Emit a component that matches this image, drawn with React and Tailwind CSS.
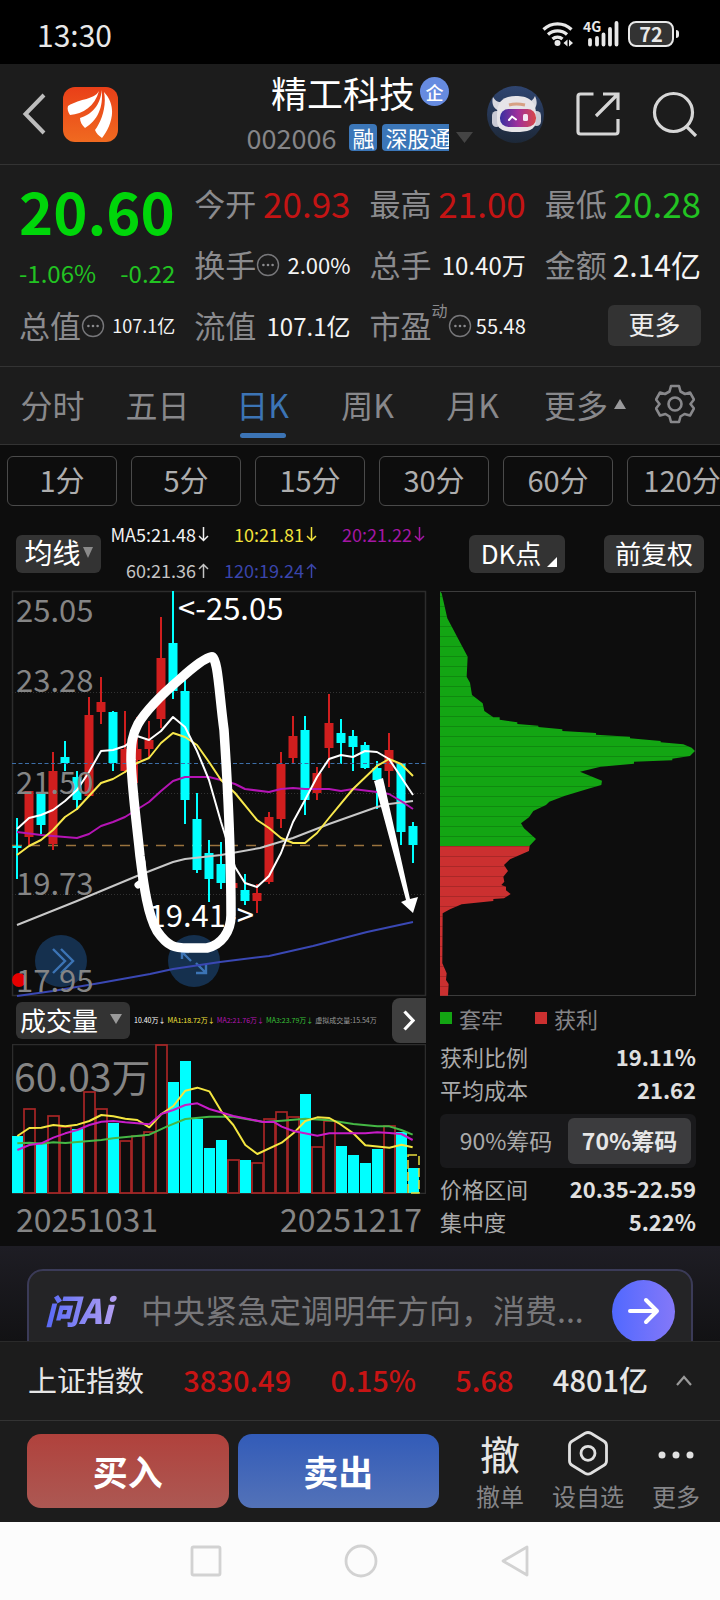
import React from "react";

const quoteValue = { red: "text-[#c41414]", green: "text-[#22c322]", white: "text-[#f4f4f4]" };

// color, high, body top, body bottom, low
const candles = [
  ["c", 818, 846, 848, 879], ["r", 791, 791, 837, 845], ["c", 793, 793, 825, 834],
  ["r", 752, 771, 844, 850], ["c", 741, 757, 763, 771], ["c", 771, 777, 800, 810],
  ["r", 697, 715, 796, 796], ["r", 677, 702, 712, 724], ["c", 711, 712, 763, 771],
  ["r", 711, 749, 771, 773], ["r", 717, 749, 760, 783], ["r", 721, 740, 749, 757],
  ["r", 617, 658, 719, 728], ["c", 591, 643, 691, 699], ["c", 680, 691, 800, 824],
  ["c", 793, 819, 870, 873], ["c", 840, 853, 879, 902], ["c", 842, 864, 883, 889],
  ["r", 870, 883, 888, 890], ["c", 874, 890, 901, 905], ["r", 884, 893, 901, 913],
  ["r", 812, 817, 882, 884], ["r", 752, 764, 819, 828], ["r", 716, 736, 758, 764],
  ["c", 716, 730, 800, 815], ["r", 767, 773, 793, 800], ["r", 694, 723, 748, 768],
  ["c", 719, 733, 743, 764], ["c", 730, 736, 747, 771], ["c", 742, 745, 768, 769],
  ["c", 761, 768, 780, 809], ["r", 733, 750, 771, 787], ["c", 763, 764, 832, 845],
  ["c", 822, 826, 845, 863],
];

const volumes = [
  ["c", 1136], ["r", 1109], ["c", 1144], ["r", 1116], ["r", 1127], ["c", 1129],
  ["r", 1092], ["r", 1109], ["c", 1123], ["r", 1141], ["r", 1136], ["r", 1132],
  ["r", 1045], ["c", 1082], ["c", 1061], ["c", 1119], ["c", 1148], ["c", 1140],
  ["r", 1160], ["c", 1160], ["r", 1163], ["r", 1119], ["r", 1112], ["r", 1117],
  ["c", 1094], ["r", 1147], ["r", 1121], ["c", 1146], ["c", 1155], ["c", 1163],
  ["c", 1149], ["r", 1126], ["c", 1132], ["c", 1168],
];

function More() {
  return (
    <svg viewBox="0 0 24 24" className="h-6 w-6 shrink-0" fill="none" aria-hidden="true">
      <circle cx="12" cy="12" r="10.5" stroke="#77777a" strokeWidth="1.4" />
      <g fill="#8b8b8e"><circle cx="7.4" cy="12" r="1.3" /><circle cx="12" cy="12" r="1.3" /><circle cx="16.6" cy="12" r="1.3" /></g>
    </svg>
  );
}

function Quote({ label, sup, more, value, tone = "white", size }) {
  return (
    <div className="flex items-center justify-between whitespace-nowrap">
      <span className="flex items-center text-[31px] text-[#8b8b8e]">
        {label}
        {sup && <sup className="-top-4 text-[16px] leading-4">{sup}</sup>}
        {more && <More />}
      </span>
      <span className={`${quoteValue[tone]} ${size}`}>{value}</span>
    </div>
  );
}

function StatusBar() {
  return (
    <div className="flex h-16 items-center justify-between bg-black pr-[41px] pl-[37px] pt-1 text-[#e8e8e8]">
      <span className="text-[30px]">13:30</span>
      <div className="flex items-center gap-[9px]">
        <svg width="32" height="26" viewBox="0 0 32 26" fill="none" stroke="#e8e8e8" strokeWidth="3.2" aria-hidden="true">
          <path d="M1.5 8.5a20 20 0 0 1 28 0M6 13.5a14 14 0 0 1 19 0M10.5 18a7.5 7.5 0 0 1 10 0" />
          <circle cx="15.5" cy="22" r="3" fill="#e8e8e8" stroke="none" />
          <path d="M25.5 18.500v7l-4-3.500zM27 18.500v7l4-3.500z" fill="#e8e8e8" stroke="none" />
        </svg>
        <div className="relative h-[26px] w-9">
          <span className="absolute -top-1 left-0 text-[14px] leading-[18px] font-bold">4G</span>
          <svg width="36" height="26" viewBox="0 0 36 26" stroke="#e8e8e8" strokeWidth="3.8" strokeLinecap="round" aria-hidden="true">
            <path d="M7 19v4.500M14 17v6.500M20.500 13.500v10M27 8v15.500M33.500 2v21.500" />
          </svg>
        </div>
        <div className="flex items-center gap-0.5">
          <span className="flex h-[26px] w-[46px] items-center justify-center rounded-[8px] border-2 border-[#e8e8e8] bg-[#333] text-[20px] font-bold">72</span>
          <span className="h-2 w-[3px] rounded-r bg-[#e8e8e8]" />
        </div>
      </div>
    </div>
  );
}

function Header() {
  return (
    <header className="grid h-[101px] grid-cols-[1fr_auto_1fr] items-center border-b border-[#333] bg-[#1c1c1c]">
      <div className="flex items-center gap-[17px] pl-[22px]">
        <button aria-label="返回">
          <svg width="24" height="42" viewBox="0 0 24 42" fill="none" stroke="#bdbdbd" strokeWidth="4" aria-hidden="true"><path d="M22 2 3.500 21 22 40" /></svg>
        </button>
        <svg width="55" height="55" viewBox="0 0 55 55" aria-hidden="true">
          <defs><linearGradient id="brand" x1="0" y1="0" x2="0" y2="1"><stop stopColor="#e93f18" /><stop offset="1" stopColor="#f06a20" /></linearGradient></defs>
          <rect width="55" height="55" rx="12" fill="url(#brand)" />
          <path d="M36 4C31 13 18 11 5 19c-1 3 0 6 2 9 13-1 25-9 29-24Z" fill="#fff" />
          <path d="M38.500 3C38 18 28 28 17 31c0 4 2 7 5 10C34 34 41 20 38.500 3Z" fill="#fff" />
          <path d="M41 5c3 15-3 30-9 38 1 3 4 6 7 8 8-10 17-30 2-46Z" fill="#fff" />
        </svg>
      </div>
      <div className="flex flex-col items-center gap-2.5 pb-2">
        <div className="flex items-center gap-[5px]">
          <h1 className="text-[36px] leading-[44px] text-white">精工科技</h1>
          <span className="flex h-[29px] w-[29px] items-center justify-center rounded-full bg-[#668be0] text-[18px] leading-[18px] font-medium text-white">企</span>
        </div>
        <div className="flex items-center gap-[5px] text-[22px] leading-[27px] text-white">
          <span className="mr-2 text-[27px] text-[#858588]">002006</span>
          <span className="rounded bg-[#3b76b8] px-[3px]">融</span>
          <span className="w-[67px] overflow-hidden rounded-l bg-[#3b76b8] pl-[3px] whitespace-nowrap">深股通</span>
          <svg width="17" height="11" viewBox="0 0 17 11" className="ml-0.5" aria-hidden="true"><path d="M0 0h17L8.500 11z" fill="#444" /></svg>
        </div>
      </div>
      <div className="flex items-center justify-end gap-8 pr-[22px]">
        <button aria-label="智能助手">
          <svg width="57" height="57" viewBox="0 0 57 57" aria-hidden="true">
            <defs><linearGradient id="visor"><stop stopColor="#3730a0" /><stop offset=".5" stopColor="#a02f9b" /><stop offset="1" stopColor="#d94848" /></linearGradient>
              <linearGradient id="disk" x1="0" y1="0" x2="0" y2="1"><stop stopColor="#2f4570" /><stop offset="1" stopColor="#1d2838" /></linearGradient></defs>
            <circle cx="28.500" cy="28.500" r="28.500" fill="url(#disk)" />
            <path d="M6 11c-2 7 1 13 8 14l5-9c-6 1-10 0-13-5ZM48 10c3 6 2 13-4 15l-7-9c5 1 9-1 11-6Z" fill="#d8d8df" />
            <rect x="5" y="25" width="9" height="16" rx="4.500" fill="#c9cad5" /><rect x="45" y="25" width="9" height="15" rx="4.500" fill="#c9cad5" />
            <path d="M10 28C10 14 18 10 29 10s20 4 20 18v7c0 9-9 11-20 11s-19-2-19-11Z" fill="#e6e4e8" />
            <path d="M22 19q7-2 16 0" stroke="#d7a184" strokeWidth="3" fill="none" />
            <rect x="13" y="23" width="36" height="18" rx="8.500" fill="url(#visor)" />
            <path d="m22 34 3-3.500 4 3" stroke="#fff" strokeWidth="2" fill="none" strokeLinecap="round" /><rect x="36" y="28" width="5" height="7" rx="1.500" fill="#f3e6f4" />
          </svg>
        </button>
        <button aria-label="分享">
          <svg width="44" height="44" viewBox="0 0 44 44" fill="none" stroke="#d6d6d6" strokeWidth="3.2" aria-hidden="true"><path d="M17.500 2H4.500Q2 2 2 4.500v35Q2 42 4.500 42h35q2.500 0 2.500-2.500V27M27 2h15v16M42 2 20 24" /></svg>
        </button>
        <button aria-label="搜索">
          <svg width="46" height="46" viewBox="0 0 46 46" fill="none" stroke="#d6d6d6" strokeWidth="3.2" aria-hidden="true"><circle cx="21.500" cy="21.500" r="19" /><path d="m34 35 10 10" /></svg>
        </button>
      </div>
    </header>
  );
}

function Quotes() {
  return (
    <section className="grid grid-cols-4 grid-rows-[repeat(3,61px)] gap-x-[19px] border-b border-[#333] bg-[#1c1c1c] px-[19px] pt-2 pb-2.5">
      <div className="row-span-2 flex flex-col gap-2.5 text-[#00d60a]">
        <strong className="text-[58px] leading-[74px] font-bold">20.60</strong>
        <div className="flex justify-between text-[24px] leading-8 text-[#22c322]"><span>-1.06%</span><span>-0.22</span></div>
      </div>
      <Quote label="今开" value="20.93" tone="red" size="text-[35px]" />
      <Quote label="最高" value="21.00" tone="red" size="text-[35px]" />
      <Quote label="最低" value="20.28" tone="green" size="text-[35px]" />
      <Quote label="换手" more value="2.00%" size="text-[22px]" />
      <Quote label="总手" value="10.40万" size="text-[24px]" />
      <Quote label="金额" value="2.14亿" size="text-[30px]" />
      <Quote label="总值" more value="107.1亿" size="text-[18px]" />
      <Quote label="流值" value="107.1亿" size="text-[24px]" />
      <Quote label="市盈" sup="动" more value="55.48" size="text-[20px]" />
      <button className="h-[41px] w-[93px] self-center justify-self-end rounded-md bg-[#333] pb-1 text-[26px] leading-9 text-[#eee]">更多</button>
    </section>
  );
}

function Tabs() {
  return (
    <nav className="grid h-[78px] grid-cols-[repeat(5,105fr)_120fr_60fr] items-stretch border-b border-[#333] bg-[#1c1c1c] pr-[15px] pb-1 text-[32px] text-[#88888b]">
      <button>分时</button>
      <button>五日</button>
      <button className="relative text-[#3c74b5]" aria-current="page">日K<span className="absolute bottom-0.5 left-1/2 h-[5px] w-[46px] -translate-x-1/2 rounded-full bg-[#3c74b5]" /></button>
      <button>周K</button>
      <button>月K</button>
      <button className="flex items-center justify-center gap-1.5">更多<svg width="12" height="10" viewBox="0 0 12 10" aria-hidden="true"><path d="M6 0l6 10H0z" fill="#9a9a9c" /></svg></button>
      <button aria-label="设置" className="flex items-center justify-center">
        <svg width="40" height="40" viewBox="0 0 40 40" fill="none" stroke="#88888b" strokeWidth="2.6" strokeLinejoin="round" aria-hidden="true">
          <path d="M16 2h8l1.500 5.500 4.500 2.500 5-1.500 4 7-3.500 4.500L39 24.500l-4 7-5.500-1.500-4 2.500L24 38h-8l-1.500-5.500-4-2.500L5 31.500l-4-7L4.500 20 1 15.500l4-7L10 10l4.500-2.500Z" />
          <circle cx="20" cy="20" r="6.500" />
        </svg>
      </button>
    </nav>
  );
}

function Intervals() {
  return (
    <div className="flex gap-3.5 overflow-hidden px-[7px] pt-[11px] text-[29px] text-[#aeaeae]">
      {["1分", "5分", "15分", "30分", "60分", "120分"].map((t) => (
        <button key={t} className="h-[50px] w-[110px] shrink-0 rounded-md border border-[#4a4a4a] pb-1 leading-[42px]">{t}</button>
      ))}
    </div>
  );
}

function Ma({ children, up, className }) {
  return <span className={`flex items-center justify-end gap-0.5 ${className}`}>{children}
    <svg width="11" height="15" viewBox="0 0 11 15" fill="none" stroke="currentColor" strokeWidth="1.5" aria-label={up ? "升" : "降"}>
      <path d={up ? "M5.500 15V1.500M1 6l4.500-4.500L10 6" : "M5.500 0v13.500M1 9l4.500 4.500L10 9"} />
    </svg>
  </span>;
}

function ChartTools() {
  return (
    <div className="flex h-[84px] pr-4 pl-4">
      <button className="mt-[29px] flex h-[38px] w-[85px] items-center justify-center gap-0.5 rounded-md bg-[#333] pb-1 text-[28px] text-white">均线
        <svg width="10" height="11" viewBox="0 0 10 11" aria-hidden="true"><path d="M0 0h10L5 11z" fill="#8a8a8a" /></svg>
      </button>
      <div className="grid w-[324px] grid-cols-3 grid-rows-[36px_36px] pt-2.5 text-[18px] whitespace-nowrap">
        <Ma className="text-[#f2f2f2]">MA5:21.48</Ma>
        <Ma className="text-[#f2e33c]">10:21.81</Ma>
        <Ma className="text-[#a416a4]">20:21.22</Ma>
        <Ma up className="text-[#c4c4c4]">60:21.36</Ma>
        <Ma up className="text-[#3a45ac]">120:19.24</Ma>
      </div>
      <div className="mt-[29px] flex flex-1 justify-between pl-11">
        <button className="flex h-[38px] w-24 items-center justify-center gap-1.5 rounded-md bg-[#333] pb-1 pl-1 text-[26px] text-white">DK点
          <svg width="10" height="10" viewBox="0 0 10 10" className="mt-5" aria-hidden="true"><path d="M10 0v10H0z" fill="#fff" /></svg>
        </button>
        <button className="flex h-[38px] w-[100px] items-center justify-center rounded-md bg-[#333] pb-1 text-[26px] text-white">前复权</button>
      </div>
    </div>
  );
}

function Line({ points, color, width = 2 }) {
  return <polyline points={points} fill="none" stroke={color} strokeWidth={width} strokeLinejoin="round" />;
}

function KLine() {
  return (
    <svg viewBox="12 591 414 405" className="block w-full overflow-visible" role="img" aria-label="日K线">
      <rect x="12.500" y="591.500" width="413" height="404" fill="none" stroke="#2c2c2c" strokeWidth="1.500" />
      <g stroke="#333" strokeDasharray="1 2"><path d="M12 692.500h414M12 793.500h414M12 894.500h414" /></g>
      <g fill="#15304e"><circle cx="61" cy="961" r="26" /><circle cx="194" cy="961" r="26" /></g>
      <g fill="none" stroke="#3c74b5" strokeWidth="2.400"><path d="m53 949 12 12-12 12M61 949l12 12-12 12M182 959v-7h7M182 952l9 9M206 965v8h-10M206 973l-10-10" /></g>
      <circle cx="19" cy="980" r="7" fill="#e60000" />
      <path d="M12 845.500h370" stroke="#9a733e" strokeDasharray="10 8" strokeWidth="1.300" />
      {candles.map(([c, high, top, bottom, low], i) => {
        const x = 17 + i * 12;
        const color = c === "c" ? "#00ffff" : "#d01e1e";
        return <g key={i} fill={color}><rect x={x - 1} y={high} width="2" height={low - high} /><rect x={x - 4.5} y={top} width="9" height={bottom - top} /></g>;
      })}
      <path d="M12 763.500h414" stroke="#3c6ea8" strokeDasharray="4 2.500" />
      <Line color="#c8c8c8" points="17,925 77,901 101,891 137,876 173,862 185,859 221,855 260,848 293,838 329,824 377,807 389,804 413,801" />
      <Line color="#3a48b4" points="17,996 53,991 100,983 150,974 173,969 220,962 269,956 313,946 367,932 413,922" />
      <Line color="#b414b4" points="17,832 41,835 77,838 89,834 101,826 113,822 125,817 149,802 161,791 173,781 185,777 209,777 221,780 235,784 245,789 269,792 281,789 293,788 305,789 329,789 341,791 353,789 377,792 389,794 401,801 413,809" />
      <Line color="#f8e84c" points="17,855 29,846 41,840 53,830 65,817 77,809 89,796 101,783 113,779 125,772 137,763 149,758 161,743 173,733 185,737 197,745 209,762 221,780 235,793 257,820 269,828 281,838 293,843 305,843 317,833 329,818 353,789 377,766 389,759 401,764 413,776" />
      <Line color="#fff" points="17,829 29,818 41,815 53,810 65,801 77,790 89,772 101,751 113,750 125,746 137,736 149,740 161,731 173,717 185,727 197,751 209,780 221,822 235,867 245,883 257,887 269,876 281,853 293,822 305,800 317,777 329,759 341,755 353,757 365,751 377,752 389,759 401,777 413,795" />
      <g fill="#858585" fontSize="31">
        <text x="16" y="622">25.05</text><text x="16" y="692">23.28</text><text x="16" y="794">21.50</text><text x="16" y="895">19.73</text><text x="16" y="992">17.95</text>
      </g>
      <g fill="#fff" fontSize="31"><text x="178" y="620">&lt;-25.05</text><text x="254" y="927" textAnchor="end">19.41-&gt;</text></g>
      <path d="M211 657C204 658 190 670 180 679 166 691 147 709 138 724 132 735 131 744 131 760 132 790 137 826 140 856 144 888 148 915 157 931 168 947 175 948 188 948H207C221 945 231 932 231 915 231 870 228 790 224 730 219 694 218 655 211 657Z" fill="none" stroke="#fff" strokeWidth="9.500" strokeLinejoin="round" />
      <path d="M142 862v20l-4 3" stroke="#fff" strokeWidth="7" strokeLinecap="round" fill="none" />
      <path d="M374 781 383 778 410 899 418 897 413 913 401 902 406 900Z" fill="#fff" />
    </svg>
  );
}

function VolumeChart() {
  return (
    <svg viewBox="12 1044 414 150" className="block w-full" role="img" aria-label="成交量图">
      <rect x="12.500" y="1044.500" width="413" height="149" fill="none" stroke="#2c2c2c" strokeWidth="1.500" />
      <text x="14" y="1092" fontSize="39" fill="#858585">60.03万</text>
      {volumes.map(([c, top], i) => c === "c"
        ? <rect key={i} x={12 + i * 12} y={top} width="11" height={1193 - top} fill="#00ffff" />
        : <rect key={i} x={12 + i * 12} y={top} width="11" height={1193 - top} fill="none" stroke="#a82626" strokeWidth="1.700" />)}
      <rect x="408" y="1155" width="11" height="38" fill="none" stroke="#e8dc3c" strokeWidth="1.500" strokeDasharray="9 3" />
      <g transform="translate(0 990) scale(.33333)">
        <Line width="6" color="#45b845" points="52,460 88,458 124,461 160,457 196,459 268,453 304,450 340,445 448,434 500,410 556,387 628,380 700,380 790,396 845,392 916,386 988,391 1060,402 1132,409 1168,409 1204,420 1238,434" />
        <Line width="6" color="#f4e640" points="52,438 88,414 124,413 160,405 196,409 232,404 268,393 304,375 340,379 376,386 412,390 448,412 484,372 520,348 556,302 592,293 628,304 664,364 700,405 736,465 772,492 845,458 880,430 916,393 952,382 988,384 1020,402 1060,430 1096,466 1168,473 1204,464 1238,472" />
        <Line width="6" color="#c81cc8" points="52,480 88,465 124,460 160,443 196,430 232,420 268,405 304,395 340,393 376,397 448,403 484,372 520,360 556,345 592,340 628,357 700,378 790,396 820,395 845,410 880,423 952,437 988,430 1096,430 1132,427 1168,429 1204,432 1238,450" />
      </g>
    </svg>
  );
}

function Distribution() {
  return (
    <svg viewBox="0 0 256 405" className="block w-full" role="img" aria-label="筹码分布">
      <defs><pattern id="stripes" width="256" height="10" patternUnits="userSpaceOnUse"><path d="M0 5.500h256" stroke="#000" strokeOpacity=".16" /></pattern>
        <clipPath id="profile"><polygon transform="translate(-10 -11) scale(.33333)" points="30,35 35,40 52,115 113,230 110,290 120,308 126,345 158,370 163,393 190,412 209,412 209,419 262,427 262,432 325,437 325,441 397,448 397,453 498,459 498,464 600,470 600,475 692,483 692,487 760,493 785,503 795,513 780,528 727,536 727,541 612,545 612,551 512,560 450,575 516,602 514,615 475,626 403,648 358,665 348,675 310,693 297,712 273,730 282,745 318,777 299,797 297,813 240,838 222,855 234,873 220,890 223,905 214,915 228,920 228,931 242,942 222,955 190,957 190,963 95,973 60,988 38,1000 37,1150 50,1180 48,1200 56,1212 54,1247 30,1247" /></clipPath></defs>
      <rect x=".5" y=".5" width="255" height="404" fill="none" stroke="#3c3c3c" />
      <g clipPath="url(#profile)">
        <rect width="256" height="255" fill="#13a513" />
        <rect y="255" width="256" height="150" fill="#cb3030" />
        <rect width="256" height="405" fill="url(#stripes)" />
      </g>
    </svg>
  );
}

function Stat({ label, value }) {
  return <div className="flex h-[33px] items-center justify-between"><dt className="text-[22px] text-[#aaa]">{label}</dt><dd className="text-[22px] font-bold text-[#e0e0e0]">{value}</dd></div>;
}

function Charts() {
  return (
    <main className="grid grid-cols-[minmax(0,414fr)_minmax(0,256fr)] gap-x-3.5 pr-6 pb-1 pl-3 pt-px">
      <section>
        <KLine />
        <div className="flex h-12 items-center">
          <button className="ml-1 flex h-[37px] w-[114px] shrink-0 items-center gap-3 rounded-md bg-[#333] pb-0.5 pl-1 text-[26px] text-white">成交量
            <svg width="12" height="10" viewBox="0 0 12 10" aria-hidden="true"><path d="M0 0h12L6 10z" fill="#9a9a9a" /></svg>
          </button>
          <div className="flex min-w-0 flex-1 gap-0.5 pl-1 text-[7px] whitespace-nowrap">
            <span className="text-white">10.40万↓</span><span className="text-[#f2e33c]">MA1:18.72万↓</span><span className="text-[#b414b4]">MA2:21.76万↓</span><span className="text-[#38c038]">MA3:23.79万↓</span><span className="text-[#999]">虚拟成交量:15.54万</span>
          </div>
          <button aria-label="下一项" className="flex h-[45px] w-[34px] shrink-0 items-center justify-center rounded-l-lg bg-[#3f3f3f]">
            <svg width="12" height="21" viewBox="0 0 12 21" fill="none" stroke="#fff" strokeWidth="3.200" aria-hidden="true"><path d="m1.500 1.500 8.500 9-8.500 9" /></svg>
          </button>
        </div>
        <VolumeChart />
        <div className="flex justify-between px-1 text-[32px] leading-[48px] text-[#858585]"><span>20251031</span><span>20251217</span></div>
      </section>
      <section>
        <Distribution />
        <div className="flex h-11 items-center gap-8 text-[22px] text-[#858588]">
          <span className="flex items-center gap-[7px]"><i className="h-3 w-3 bg-[#13a513]" />套牢</span>
          <span className="flex items-center gap-[7px]"><i className="h-3 w-3 bg-[#cb3030]" />获利</span>
        </div>
        <dl>
          <Stat label="获利比例" value="19.11%" />
          <Stat label="平均成本" value="21.62" />
        </dl>
        <div className="mt-2 mb-1 flex h-[54px] items-center rounded-md bg-[#19191b] pr-[5px] pl-1 text-[23px]">
          <button className="flex-1 pb-0.5 text-[#aaa]">90%筹码</button>
          <button className="h-[46px] w-[123px] rounded-md bg-[#3c3c3e] pb-0.5 font-bold text-[#e6e6e6]" aria-pressed="true">70%筹码</button>
        </div>
        <dl>
          <Stat label="价格区间" value="20.35-22.59" />
          <Stat label="集中度" value="5.22%" />
        </dl>
      </section>
    </main>
  );
}

function AskAi() {
  return (
    <section className="h-[95px] overflow-hidden bg-linear-to-b from-[#1e1d24] to-[#121214] px-[27px] pt-[23px]">
      <form className="flex h-[84px] items-center rounded-t-2xl border-2 border-[#3b3b58] bg-[#242426] pr-4 pl-4" onSubmit={(e) => e.preventDefault()}>
        <span className="mr-[22px] w-[74px] shrink-0 bg-linear-to-r from-[#5868f6] to-[#b7a0f0] bg-clip-text pb-1 text-[34px] font-black whitespace-nowrap text-transparent italic">问Ai</span>
        <input aria-label="提问" placeholder="中央紧急定调明年方向，消费..." className="min-w-0 flex-1 bg-transparent pb-1 text-[32px] text-[#77777a] outline-none placeholder:text-[#77777a] placeholder:opacity-100" />
        <button aria-label="发送" className="flex h-[63px] w-[63px] shrink-0 items-center justify-center rounded-full bg-linear-to-r from-[#5068ff] to-[#8478f8]">
          <svg width="32" height="28" viewBox="0 0 32 28" fill="none" stroke="#fff" strokeWidth="4" strokeLinecap="round" strokeLinejoin="round" aria-hidden="true"><path d="M2 14h27M18 3l11 11-11 11" /></svg>
        </button>
      </form>
    </section>
  );
}

function IndexBar() {
  return (
    <div className="flex h-[79px] items-center justify-between border-t border-[#2a2a2a] bg-[#1c1c1c] px-7 pb-0.5 text-[29px] font-medium text-[#e6e6e6]">
      <span className="font-normal">上证指数</span>
      <span className="text-[#c81414]">3830.49</span>
      <span className="text-[#c81414]">0.15%</span>
      <span className="text-[#c81414]">5.68</span>
      <div className="flex items-center gap-7">
        <span>4801亿</span>
        <button aria-label="展开"><svg width="16" height="11" viewBox="0 0 16 11" fill="none" stroke="#999" strokeWidth="2.200" aria-hidden="true"><path d="m1 10 7-8 7 8" /></svg></button>
      </div>
    </div>
  );
}

function Trade() {
  return (
    <div className="flex h-[102px] border-t border-[#333] bg-[#1c1c1c] pr-5 pl-[27px] pt-[13px]">
      <div className="flex flex-1 gap-[9px] text-[35px] font-bold text-white">
        <button className="h-[74px] flex-1 rounded-[14px] bg-linear-to-b from-[#b0413c] to-[#ac5853]">买入</button>
        <button className="h-[74px] flex-1 rounded-[14px] bg-linear-to-b from-[#325bb8] to-[#5372b8]">卖出</button>
      </div>
      <div className="-mt-1 ml-[37px] flex gap-7 text-[24px] leading-8 text-[#858588]">
        <button className="flex flex-col items-center gap-1"><span className="text-[40px] leading-[46px] text-[#e6e6e6]">撤</span>撤单</button>
        <button className="flex flex-col items-center gap-1">
          <svg width="42" height="46" viewBox="0 0 42 46" fill="none" stroke="#e0e0e0" strokeWidth="2.800" aria-hidden="true"><path d="M18 3.300q3-1.600 6 0l13 8q2.500 1.500 2.500 4.500v15q0 3-2.500 4.500l-13 8q-3 1.600-6 0l-13-8Q2.500 33.800 2.500 30.800v-15q0-3 2.500-4.500Z" /><circle cx="21" cy="23.300" r="7" /></svg>
          设自选
        </button>
        <button className="flex flex-col items-center gap-1">
          <svg width="36" height="46" viewBox="0 0 36 46" fill="#e0e0e0" aria-hidden="true"><circle cx="4" cy="25" r="3.500" /><circle cx="18" cy="25" r="3.500" /><circle cx="32" cy="25" r="3.500" /></svg>
          更多
        </button>
      </div>
    </div>
  );
}

function SystemNav() {
  return (
    <div className="flex h-[78px] items-center justify-center gap-[122px] bg-[#fcfcfc]">
      <button aria-label="最近任务"><svg width="32" height="32" viewBox="0 0 32 32" fill="none" stroke="#d2d2d2" strokeWidth="2.800" aria-hidden="true"><rect x="2" y="2" width="28" height="28" rx="1.500" /></svg></button>
      <button aria-label="主页"><svg width="34" height="34" viewBox="0 0 34 34" fill="none" stroke="#d2d2d2" strokeWidth="2.800" aria-hidden="true"><circle cx="17" cy="17" r="15" /></svg></button>
      <button aria-label="返回上级"><svg width="30" height="34" viewBox="0 0 30 34" fill="none" stroke="#d2d2d2" strokeWidth="2.800" strokeLinejoin="round" aria-hidden="true"><path d="M27 3v28L3 17Z" /></svg></button>
    </div>
  );
}

export default function App() {
  return (
    <div className="w-full overflow-hidden bg-[#0d0d0d] font-['Noto_Sans_CJK_SC','Noto_Sans',sans-serif]">
      <StatusBar />
      <Header />
      <Quotes />
      <Tabs />
      <Intervals />
      <ChartTools />
      <Charts />
      <AskAi />
      <IndexBar />
      <Trade />
      <SystemNav />
    </div>
  );
}
